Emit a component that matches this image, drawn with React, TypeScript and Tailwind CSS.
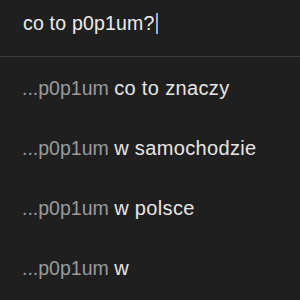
import React from "react";

const rows = ["co to znaczy", "w samochodzie", "w polsce", "w"];

export default function App() {
  return (
    <div className="w-[300px] h-[300px] bg-[#1f1f1f] overflow-hidden" style={{ fontFamily: "'Liberation Sans', Arial, sans-serif" }}>
      <div className="h-[57px] flex items-center pl-[23px] pb-[9px] border-b border-[#3d3d3d]">
        <span className="text-[19.5px] tracking-[0.2px] text-[#ececec] leading-none">co to p0p1um?</span>
        <span className="w-[2px] h-[21px] bg-[#8ab4f8] ml-[1px]" />
      </div>
      <div className="flex flex-col mt-[1px]">
        {rows.map((r) => (
          <div key={r} className="h-[60px] flex items-center pl-[22px]">
            <div className="leading-none whitespace-nowrap">
              <span className="text-[19.5px] text-[#9a9a9a]">...p0p1um </span>
              <span className="text-[20px] tracking-[0.35px] text-[#e6e6e6]">{r}</span>
            </div>
          </div>
        ))}
      </div>
    </div>
  );
}
